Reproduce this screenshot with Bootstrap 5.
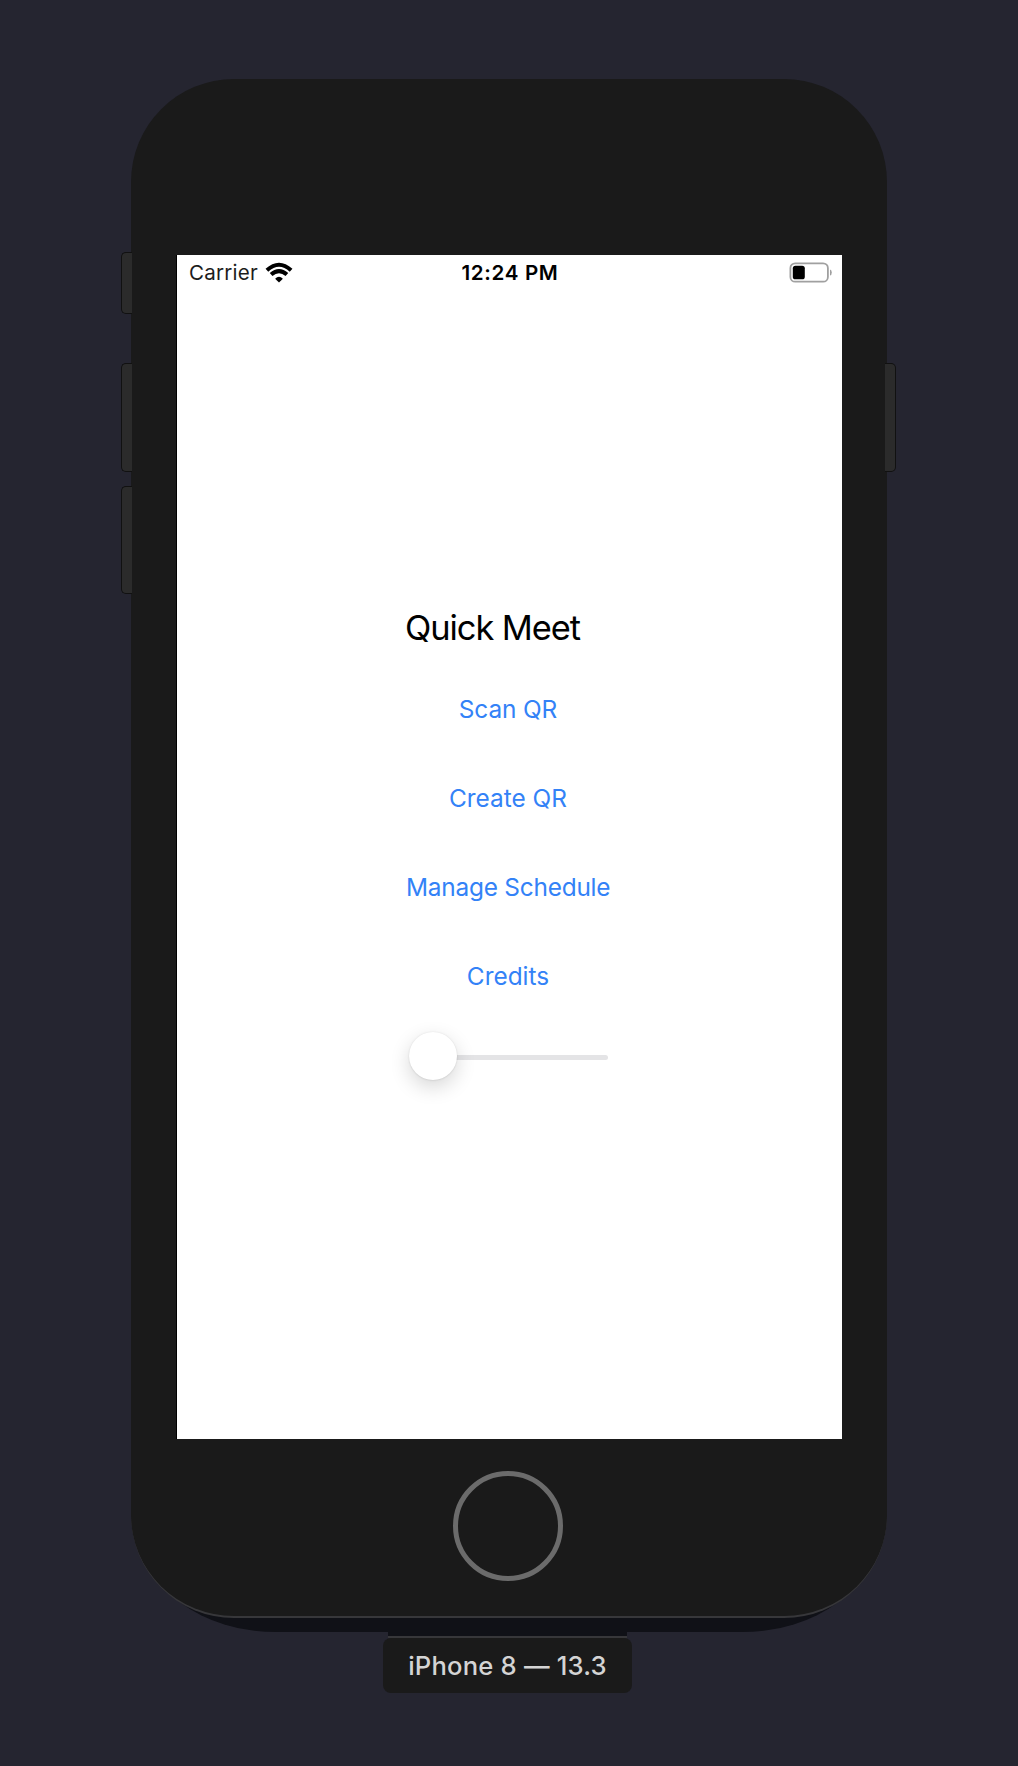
<!DOCTYPE html>
<html lang="en">
<head>
<meta charset="utf-8">
<meta name="viewport" content="width=device-width, initial-scale=1">
<title>Quick Meet</title>
<link rel="stylesheet" href="https://cdn.jsdelivr.net/npm/bootstrap@5.3.0/dist/css/bootstrap.min.css">
<style>
html, body { height: 1766px; overflow: hidden; }
body { background: #252530; font-family: Inter, "Liberation Sans", sans-serif; padding-top: 79px; }
.phone { width: 756px; height: 1539px; background: #1a1a1a; border-radius: 103px; border-bottom: 2px solid #37373a; padding: 176px 0 0 46px; }
.phone-shadow { left: 10px; right: 10px; bottom: -14px; height: 400px; border-radius: 0 0 135px 135px / 0 0 100px 100px; background: #101117; z-index: -1; }
.side-key { width: 11px; background: #2b2b2b; border: 1.5px solid #111; z-index: 0; }
.side-left { left: -10px; border-radius: 5px 0 0 5px; border-right: 0; }
.side-right { right: -9px; border-radius: 0 5px 5px 0; border-left: 0; }
.key-mute { top: 173px; height: 62px; }
.key-up { top: 284px; height: 109px; }
.key-down { top: 407px; height: 108px; }
.screen { width: 665px; height: 1184px; background: #fff; color: #000; box-shadow: -1px 0 0 #000; }
.status-bar { height: 36px; font-size: 20.6px; line-height: 36px; padding: 0 10px 0 11px; }
.status-side { flex: 1 1 0; }
.carrier { letter-spacing: .2px; color: #1c1c1c; padding-left: 1px; }
.wifi { margin-left: 7px; }
.battery { margin-top: -2px; }
.clock { font-weight: 600; letter-spacing: .65px; }
.menu-stack { width: 204px; margin: 314px 0 0 229px; }
.app-title { font-size: 34.4px; line-height: 45px; margin: 0 0 15px; font-weight: 400; letter-spacing: -1.05px; text-indent: -1px; }
.menu-stack .btn { --bs-btn-color: #3382f7; --bs-btn-hover-color: #3382f7; font-size: 24.4px; line-height: 89px; padding: 0; border: 0; text-decoration: none; }
.t-scan { letter-spacing: -.12px; }
.t-manage { letter-spacing: -.22px; }
.slider { height: 72px; }
.slider-track { height: 5px; border-radius: 3px; background: #e4e4e6; margin: 0 2px 0 4px; }
.slider-thumb { left: 3px; top: 11px; width: 48px; height: 48px; background: #fff; box-shadow: 0 0 2px rgba(0,0,0,.1), 0 7px 20px rgba(0,0,0,.16), 0 1px 2px rgba(0,0,0,.04); }
.home-key { width: 110px; height: 110px; border: 5px solid #6b6b6b; margin: 32px 0 0 276px; }
.label-wrap { width: 249px; margin-top: 18px; margin-left: -3px; }
.label-shade { left: 5px; right: 5px; top: -18px; height: 20px; background: #101117; border-bottom: 2px solid #37373a; }
.device-label { height: 55px; margin-top: 2px; border-radius: 8px; background: #1a1a1a; color: #d4d4d4; font-size: 25.6px; font-weight: 500; line-height: 55px; letter-spacing: .2px; }
</style>
<script src="https://cdn.jsdelivr.net/npm/bootstrap@5.3.0/dist/js/bootstrap.bundle.min.js"></script>
</head>
<body>
<div class="d-flex flex-column align-items-center">
  <div class="position-relative z-1">
    <div class="phone-shadow position-absolute"></div>
    <div class="phone">
      <main class="screen overflow-hidden">
        <div class="status-bar d-flex align-items-center">
          <div class="status-side d-flex align-items-center">
            <span class="carrier">Carrier</span>
            <svg class="wifi" width="28" height="22" viewBox="0 0 28 22">
              <g fill="none" stroke="#000" stroke-width="4">
                <path d="M1.9 8.3Q14 -2.8 26.1 8.3"/>
                <path d="M6.1 12.6Q14 5.5 21.9 12.6"/>
              </g>
              <path d="M10.1 16.7Q14 12.8 17.9 16.7L14 20.6Z"/>
            </svg>
          </div>
          <span class="clock">12:24 PM</span>
          <div class="status-side d-flex justify-content-end">
            <svg class="battery" width="43" height="21" viewBox="0 0 43 21">
              <rect x="1.4" y="1.3" width="37.5" height="18.4" rx="4.8" fill="#fff" stroke="#a0a0a0" stroke-width="1.8"/>
              <rect x="3.8" y="3.7" width="12" height="13.6" rx="2.6"/>
              <path d="M41 7.5Q42.8 8 42.8 10.5T41 13.5Z" fill="#a0a0a0"/>
            </svg>
          </div>
        </div>
        <div class="menu-stack d-flex flex-column">
          <h1 class="app-title text-nowrap">Quick Meet</h1>
          <a class="btn text-nowrap" href="#"><span class="t-scan">Scan QR</span></a>
          <a class="btn text-nowrap" href="#"><span class="t-create">Create QR</span></a>
          <a class="btn text-nowrap" href="#"><span class="t-manage">Manage Schedule</span></a>
          <a class="btn text-nowrap" href="#"><span class="t-credits">Credits</span></a>
          <div class="slider position-relative d-flex flex-column justify-content-center">
            <div class="slider-track"></div>
            <div class="slider-thumb position-absolute rounded-circle"></div>
          </div>
        </div>
      </main>
      <div class="home-key rounded-circle"></div>
    </div>
    <div class="side-key side-left key-mute position-absolute"></div>
    <div class="side-key side-left key-up position-absolute"></div>
    <div class="side-key side-left key-down position-absolute"></div>
    <div class="side-key side-right key-up position-absolute"></div>
  </div>
  <div class="label-wrap position-relative">
    <div class="label-shade position-absolute"></div>
    <div class="device-label position-relative text-center text-nowrap">iPhone 8 — 13.3</div>
  </div>
</div>
</body>
</html>
